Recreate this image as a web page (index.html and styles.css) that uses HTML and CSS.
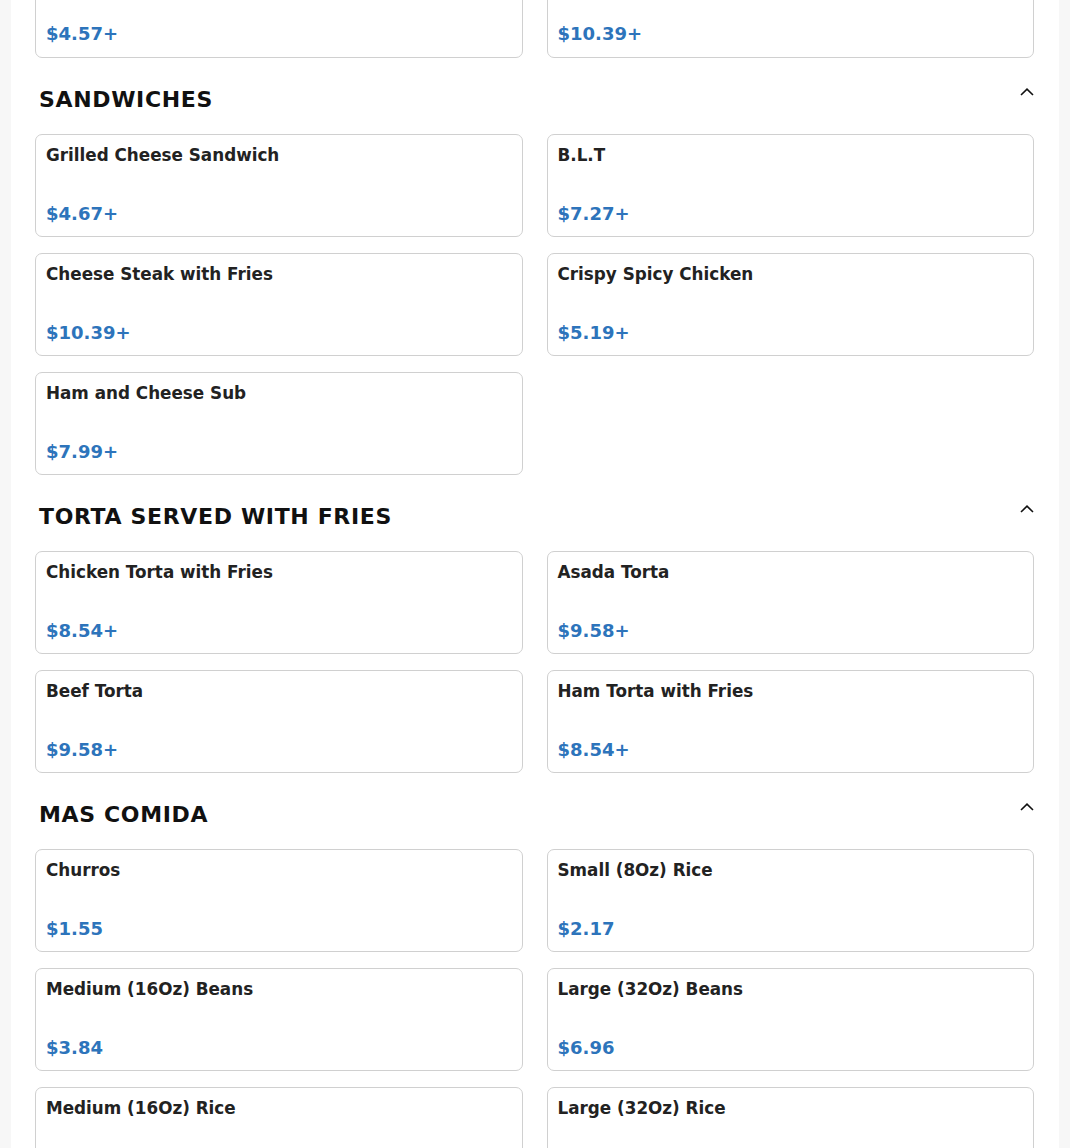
FILE: index.html
```html
<!DOCTYPE html>
<html>
<head>
<meta charset="utf-8">
<link rel="stylesheet" href="styles.css">
</head>
<body>
<div class="page">
  <div class="grid top">
    <div class="card cut"><div class="price">$4.57+</div></div>
    <div class="card cut"><div class="price">$10.39+</div></div>
  </div>

  <section class="section">
    <div class="sec-head">
      <h2>SANDWICHES</h2>
      <svg class="chev" width="14" height="8" viewBox="0 0 14 8"><path d="M1 7 L7 1.2 L13 7" fill="none" stroke="#111" stroke-width="1.6"/></svg>
    </div>
    <div class="grid">
      <div class="card"><div class="name">Grilled Cheese Sandwich</div><div class="price">$4.67+</div></div>
      <div class="card"><div class="name">B.L.T</div><div class="price">$7.27+</div></div>
      <div class="card"><div class="name">Cheese Steak with Fries</div><div class="price">$10.39+</div></div>
      <div class="card"><div class="name">Crispy Spicy Chicken</div><div class="price">$5.19+</div></div>
      <div class="card"><div class="name">Ham and Cheese Sub</div><div class="price">$7.99+</div></div>
    </div>
  </section>

  <section class="section">
    <div class="sec-head">
      <h2>TORTA SERVED WITH FRIES</h2>
      <svg class="chev" width="14" height="8" viewBox="0 0 14 8"><path d="M1 7 L7 1.2 L13 7" fill="none" stroke="#111" stroke-width="1.6"/></svg>
    </div>
    <div class="grid">
      <div class="card"><div class="name">Chicken Torta with Fries</div><div class="price">$8.54+</div></div>
      <div class="card"><div class="name">Asada Torta</div><div class="price">$9.58+</div></div>
      <div class="card"><div class="name">Beef Torta</div><div class="price">$9.58+</div></div>
      <div class="card"><div class="name">Ham Torta with Fries</div><div class="price">$8.54+</div></div>
    </div>
  </section>

  <section class="section">
    <div class="sec-head">
      <h2>MAS COMIDA</h2>
      <svg class="chev" width="14" height="8" viewBox="0 0 14 8"><path d="M1 7 L7 1.2 L13 7" fill="none" stroke="#111" stroke-width="1.6"/></svg>
    </div>
    <div class="grid">
      <div class="card"><div class="name">Churros</div><div class="price">$1.55</div></div>
      <div class="card"><div class="name">Small (8Oz) Rice</div><div class="price">$2.17</div></div>
      <div class="card"><div class="name">Medium (16Oz) Beans</div><div class="price">$3.84</div></div>
      <div class="card"><div class="name">Large (32Oz) Beans</div><div class="price">$6.96</div></div>
      <div class="card"><div class="name">Medium (16Oz) Rice</div><div class="price">$4.99</div></div>
      <div class="card"><div class="name">Large (32Oz) Rice</div><div class="price">$8.99</div></div>
    </div>
  </section>
</div>
</body>
</html>
```

FILE: styles.css
```css
html, body {
  margin: 0;
  padding: 0;
  background: #f7f7f7;
  font-family: "DejaVu Sans", sans-serif;
}
.page {
  margin: 0 11px;
  background: #fff;
  padding: 0 25px 40px 24px;
  min-height: 1148px;
}
.grid {
  display: grid;
  grid-template-columns: 1fr 1fr;
  column-gap: 24px;
  row-gap: 16px;
}
.top {
  margin-top: -45px;
}
.card {
  box-sizing: border-box;
  height: 103px;
  border: 1px solid #d0d0d0;
  border-radius: 7px;
  padding: 10px 10px 0 10px;
  display: flex;
  flex-direction: column;
}
.cut {
  justify-content: flex-end;
  padding-bottom: 12px;
}
.name {
  font-weight: bold;
  font-size: 16.8px;
  color: #222;
  line-height: 20px;
  height: 58px;
  flex-shrink: 0;
}
.price {
  font-weight: bold;
  font-size: 18px;
  color: #2d74bb;
  line-height: 22px;
}
.sec-head {
  display: flex;
  justify-content: space-between;
  align-items: flex-start;
  padding: 28px 0 0 4px;
  height: 48px;
}
.sec-head h2 {
  margin: 0;
  font-size: 22px;
  line-height: 28px;
  letter-spacing: 0.65px;
  color: #111;
}
.chev {
  margin-top: 2px;
}
```
